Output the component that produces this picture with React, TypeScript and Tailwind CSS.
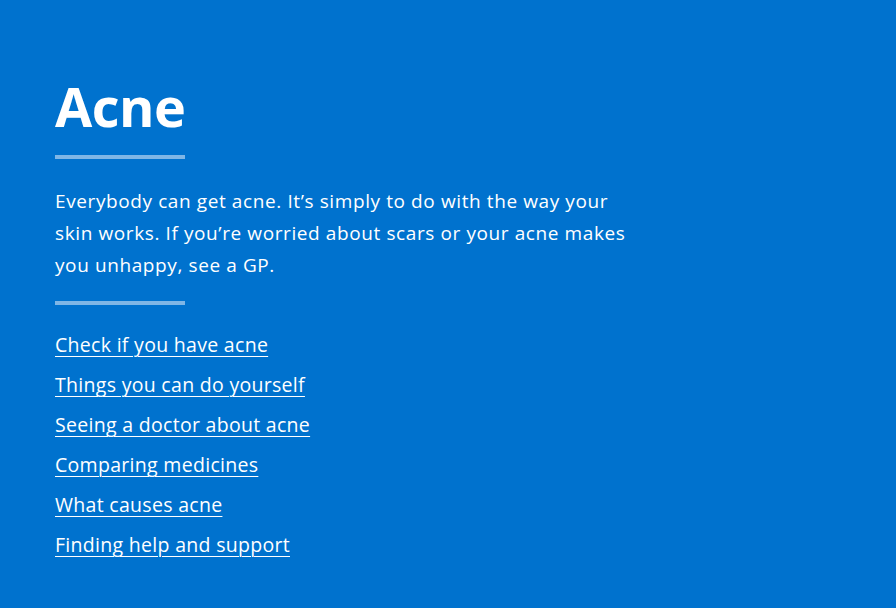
import React from 'react';

const links = [
  'Check if you have acne',
  'Things you can do yourself',
  'Seeing a doctor about acne',
  'Comparing medicines',
  'What causes acne',
  'Finding help and support',
];

const App: React.FC = () => {
  return (
    <div
      className="min-h-[608px] w-full bg-[#0072ce] text-white"
      style={{ fontFamily: '"Open Sans", "Noto Sans", Arial, sans-serif' }}
    >
      <div className="px-[55px] pt-[74px]">
        <h1 className="text-[54px] font-bold leading-[64px] tracking-[-0.5px]">Acne</h1>
        <div className="mt-[17px] h-[4px] w-[130px] bg-[#7fb6e6]" />
        <p className="mt-[26px] w-[572px] text-[19px] leading-[32px] tracking-[0.6px]">
          Everybody can get acne. It’s simply to do with the way your skin works. If you’re worried about
          scars or your acne makes you unhappy, see a GP.
        </p>
        <div className="mt-[20px] h-[4px] w-[130px] bg-[#7fb6e6]" />
        {/* Page contents */}
        <ul className="mt-[26px] flex flex-col gap-[12px]">
          {links.map((l) => (
            <li key={l} className="text-[19.5px] leading-[28px] tracking-[0.3px]">
              <a href="#" className="underline decoration-1 underline-offset-[4px]">
                {l}
              </a>
            </li>
          ))}
        </ul>
      </div>
    </div>
  );
};

export default App;
